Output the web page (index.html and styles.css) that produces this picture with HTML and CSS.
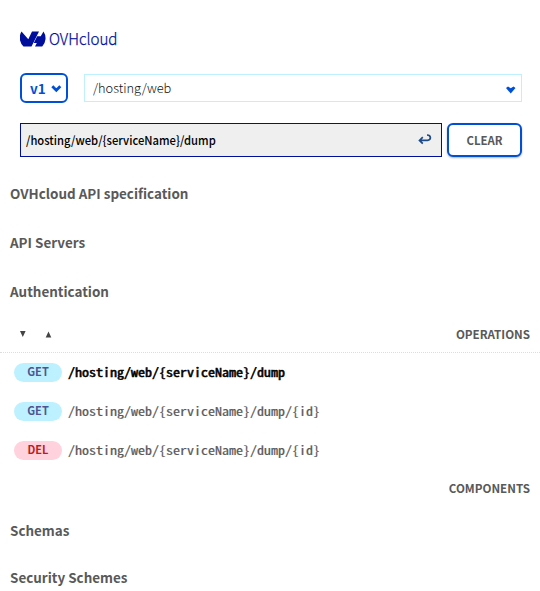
FILE: index.html
```html
<!DOCTYPE html>
<html lang="en">
<head>
<meta charset="utf-8">
<title>OVHcloud API</title>
<link rel="stylesheet" href="styles.css">
</head>
<body>
<header class="top">
  <div class="logo">
    <svg class="mark" viewBox="0 0 26 16" width="26" height="16"><path d="M1.5 .5A12 12 0 0 0 3.5 15.5H11.5L19 .5H12L8.3 8.3ZM23.5 .5A12 12 0 0 1 22.2 15.5H15L16.8 12H13.8L17.2 5.3H20.7Z"/></svg>
    <svg class="word" width="72" height="26"><text x="0" y="19" textLength="68.5" lengthAdjust="spacingAndGlyphs">OVHcloud</text></svg>
  </div>
  <div class="row pick">
    <button class="version"><span>v1</span><svg width="11" height="8" viewBox="0 0 11 8"><path d="M1.3 1.3 5.3 5.3 9.3 1.3"/></svg></button>
    <div class="select"><span class="t-select">/hosting/web</span><svg width="10" height="8" viewBox="0 0 10 8"><path class="solid" d="M0 2 2 .4 4.75 2.3 7.5 .4 9.5 2 4.75 7.5Z"/></svg></div>
  </div>
  <div class="row search">
    <div class="field"><span class="t-field">/hosting/web/{serviceName}/dump</span><svg width="14" height="12" viewBox="0 0 14 12"><path d="M4.8 3.2 1.5 6.4 4.8 9.7M1.8 6.4H9.5Q12.4 6.2 12.4 3.6 12.2 1 9 1"/></svg></div>
    <button class="clear">CLEAR</button>
  </div>
</header>
<nav>
  <h2 class="sec s1">OVHcloud API specification</h2>
  <h2 class="sec s2">API Servers</h2>
  <h2 class="sec s3">Authentication</h2>
  <div class="ops">
    <svg width="32" height="8" viewBox="0 0 32 8"><path d="M0 1H5.6L2.8 7ZM25.7 7.5H31.3L28.5 1.5Z"/></svg>
    <span class="cap">OPERATIONS</span>
  </div>
  <ul class="list">
    <li class="active"><span class="tag get">GET</span><code>/hosting/web/{serviceName}/dump</code></li>
    <li><span class="tag get">GET</span><code>/hosting/web/{serviceName}/dump/{id}</code></li>
    <li><span class="tag del">DEL</span><code>/hosting/web/{serviceName}/dump/{id}</code></li>
  </ul>
  <div class="comp"><span class="cap">COMPONENTS</span></div>
  <h2 class="sec s4">Schemas</h2>
  <h2 class="sec s5">Security Schemes</h2>
</nav>
</body>
</html>
```
FILE: styles.css
```css
* { box-sizing: border-box; }
body { margin: 0; width: 540px; height: 591px; overflow: hidden; background: #fff; color: #595959; font-family: "Noto Sans CJK SC", "Open Sans", sans-serif; }
button { font-family: inherit; background: #fff; padding: 0; border: 2px solid #0050d7; border-radius: 6px; }
svg { display: block; flex: none; }
.top { padding: 28px 18px 0 20px; height: 170px; }
.logo { display: flex; height: 22px; align-items: center; }
.mark { fill: #000e9c; margin-right: 3px; }
.word { overflow: visible; }
.word text { font-size: 16px; font-weight: 300; fill: #000e9c; stroke: #000e9c; stroke-width: .25px; }
.row { display: flex; }
.pick { margin-top: 23px; height: 30px; gap: 16px; }
.version { width: 48px; height: 30px; display: flex; align-items: center; gap: 5px; padding-left: 8px; color: #0050d7; font-size: 13.5px; font-weight: 700; line-height: 20px; }
.version svg { fill: none; stroke: #0050d7; stroke-width: 2.8; margin-top: 2px; }
.select { flex: 1; height: 28px; margin-top: 1px; border: 1px solid #bef1ff; display: flex; align-items: center; justify-content: space-between; padding: 0 5px 0 8px; color: #111; font-size: 13px; font-weight: 300; line-height: 20px; }
.t-select { transform: scaleX(.985); transform-origin: left; }
.select svg { margin-top: 4px; }
.solid { fill: #0050d7; }
.search { margin-top: 20px; height: 34px; gap: 5px; }
.field { width: 422px; border: 1px solid #000e9c; background: #efefef; display: flex; align-items: center; justify-content: space-between; padding: 0 9px 0 5px; color: #000; font-size: 12px; font-weight: 500; line-height: 20px; }
.t-field { transform: scaleX(.936); transform-origin: left; }
.field svg { fill: none; stroke: #1c4b87; stroke-width: 1.7; }
.clear { flex: 1; color: #595959; font-size: 11.4px; font-weight: 700; line-height: 20px; box-shadow: 0 1px 2px rgba(0,0,0,.3); }
.sec { margin: 0; padding-left: 10px; font-size: 13.45px; font-weight: 700; line-height: 20px; height: 20px; white-space: nowrap; }
.s1 { margin-top: 13px; }
.s2, .s3 { margin-top: 29px; }
.ops { margin-top: 15px; height: 37px; padding: 0 10px 0 20px; display: flex; align-items: center; justify-content: space-between; border-bottom: 1px dotted #ddd; }
.ops svg { fill: #444; }
.cap { font-size: 11.6px; font-weight: 700; line-height: 20px; }
.list { list-style: none; margin: 0; padding: 0; }
.list li { display: flex; align-items: center; height: 39px; padding-left: 14px; }
.tag { width: 48px; height: 19px; border-radius: 10px; text-align: center; font-size: 11px; font-weight: 700; line-height: 17px; margin-right: 6px; }
.get { background: #bef1ff; color: #4d5592; }
.del { background: #ffd2dd; color: #c11b1b; }
code { font-family: "Noto Sans Mono CJK SC", "DejaVu Sans Mono", monospace; font-size: 12px; line-height: 20px; white-space: nowrap; transform: scaleX(1.1667); transform-origin: left; margin-top: -2px; -webkit-text-stroke: .2px currentColor; }
.active code { color: #000; -webkit-text-stroke-width: .5px; }
.comp { height: 40px; padding: 6px 10px 0 0; text-align: right; line-height: 20px; }
.s4 { margin-top: 10px; }
.s5 { margin-top: 27px; }
```
